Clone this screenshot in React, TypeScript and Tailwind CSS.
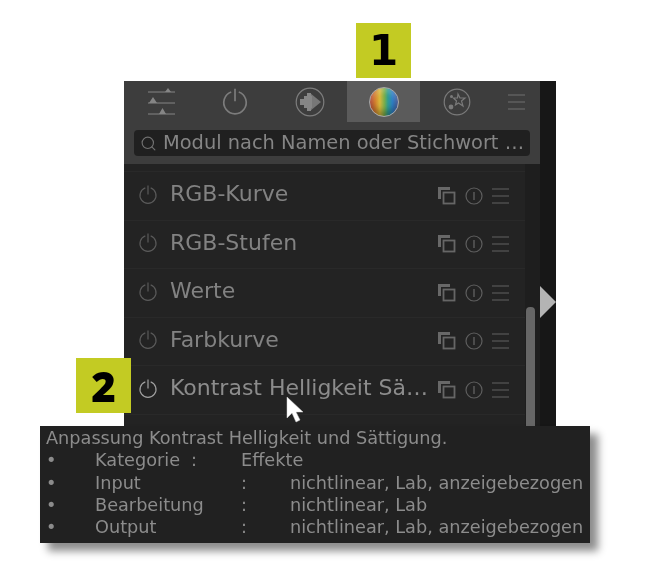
import { Search } from "lucide-react";

const modules = [
  { name: "RGB-Kurve" },
  { name: "RGB-Stufen" },
  { name: "Werte" },
  { name: "Farbkurve" },
  { name: "Kontrast Helligkeit Sä…", active: true },
];

const tooltipRows = [
  { label: "Kategorie", labelWidth: "w-[96px]", colonWidth: "w-[50px]", value: "Effekte" },
  { label: "Input", labelWidth: "w-[146px]", colonWidth: "w-[49px]", value: "nichtlinear, Lab, anzeigebezogen" },
  { label: "Bearbeitung", labelWidth: "w-[146px]", colonWidth: "w-[49px]", value: "nichtlinear, Lab" },
  { label: "Output", labelWidth: "w-[146px]", colonWidth: "w-[49px]", value: "nichtlinear, Lab, anzeigebezogen" },
];

function PowerIcon({ size = 20, className = "" }: { size?: number; className?: string }) {
  return (
    <svg width={size} height={size} viewBox="0 0 20 20" fill="none" stroke="currentColor" strokeWidth="1.200" className={className}>
      <path d="M7.300 2.900a8 8 0 1 0 5.400 0" />
      <path d="M10 0.500v9" />
    </svg>
  );
}

function SlidersIcon() {
  return (
    <svg width="27" height="30" viewBox="0 0 27 30" fill="none" stroke="#858585" strokeWidth="1">
      <path d="M0 5h27M0 16h27M0 27h27" />
      <path d="M17 5l3-4 3 4zM1 16l4-6 4 6zM11 27l3.500-6 3.500 6z" fill="#858585" stroke="none" />
    </svg>
  );
}

function ArrowCircleIcon() {
  return (
    <svg width="30" height="30" viewBox="0 0 30 30" fill="none" stroke="#7d7d7d" strokeWidth="1.200">
      <circle cx="15" cy="15" r="13.800" />
      <path d="M15 6l11 9-11 9z" fill="#777777" stroke="none" />
      <path d="M5 12h10v6H5zM9 9h8v12H9zM12 6h4v18h-4z" fill="#868686" stroke="none" />
    </svg>
  );
}

function ColorBall() {
  return (
    <div className="h-[30px] w-[30px] rounded-full border border-[#a8a8a8] bg-[linear-gradient(90deg,#d0523c_0%,#d9822f_18%,#d8b83a_35%,#76ad4c_52%,#2f9d8f_64%,#2f82c8_80%,#4a62ad_100%)] shadow-[inset_0_-5px_6px_rgba(0,0,0,0.3),inset_0_4px_5px_rgba(255,255,255,0.2)]" />
  );
}

function StarsIcon() {
  return (
    <svg width="28" height="28" viewBox="0 0 28 28" fill="none" stroke="#7a7a7a" strokeWidth="1.200">
      <circle cx="14" cy="14" r="12.800" />
      <path d="M15 6l2 4 5 0-3.500 3 1.500 5-4.500-3-3 2 1-4-3-3h4z" />
      <circle cx="8" cy="19" r="2.400" fill="#7a7a7a" stroke="none" />
      <circle cx="8.500" cy="8.500" r="1.500" fill="#7a7a7a" stroke="none" />
    </svg>
  );
}

function CopyIcon() {
  return (
    <svg width="18" height="18" viewBox="0 0 18 18" fill="none">
      <path d="M0 0h12v3H3v9H0z" fill="#686868" />
      <rect x="5.500" y="5.500" width="11" height="11" stroke="#666666" strokeWidth="1.800" />
    </svg>
  );
}

function InfoIcon() {
  return (
    <svg width="18" height="18" viewBox="0 0 18 18" fill="none" stroke="#5e5e5e" strokeWidth="1.200">
      <circle cx="9" cy="9" r="8" />
      <path d="M9 5v8" strokeWidth="1.400" />
    </svg>
  );
}

function MenuLines({ width = 17, color = "#636363" }: { width?: number; color?: string }) {
  return (
    <svg width={width} height="16" viewBox={`0 0 ${width} 16`} stroke={color} strokeWidth="1.200">
      <path d={`M0 1h${width}M0 8h${width}M0 15h${width}`} />
    </svg>
  );
}

function ModuleRow({ name, active }: { name: string; active?: boolean }) {
  return (
    <div className="flex h-[48.500px] items-center border-b border-[#292929] pr-[16px] pl-[14px]">
      <PowerIcon size={20} className={`mb-[2px] ${active ? "text-[#a0a0a0]" : "text-[#5a5a5a]"}`} />
      <span className={`ml-[12px] flex-1 pb-[4px] text-[22px] whitespace-nowrap ${active ? "text-[#8c8c8c]" : "text-[#828282]"}`}>{name}</span>
      <div className="flex items-center gap-[9px]">
        <CopyIcon />
        <InfoIcon />
        <MenuLines />
      </div>
    </div>
  );
}

export default function App() {
  return (
    <div className="relative h-[578px] w-[660px] overflow-hidden bg-white pt-[81px] pl-[124px] font-['DejaVu_Sans',sans-serif] blur-[0.5px]">
      {/* module panel */}
      <div className="relative h-[345px] w-[432px] bg-[#171717]">
        <div className="flex h-[83px] w-[416px] flex-col bg-[#3d3d3d]">
          <div className="flex h-[41px] items-center">
            <div className="flex w-[74px] justify-center"><SlidersIcon /></div>
            <div className="flex w-[74px] justify-center text-[#7c7c7c]"><PowerIcon size={28} /></div>
            <div className="flex w-[75px] justify-center"><ArrowCircleIcon /></div>
            <div className="flex h-[41px] w-[73px] items-center justify-center bg-[#5b5b5b]"><ColorBall /></div>
            <div className="flex w-[74px] justify-center"><StarsIcon /></div>
            <div className="ml-[14px] flex"><MenuLines color="#707070" /></div>
          </div>
          <div className="mt-[8px] ml-[10px] flex h-[26px] w-[396px] items-center rounded-[4px] bg-[#202020] pl-[6px] text-[19.400px] text-[#858585]">
            <Search size={17} strokeWidth={1.600} className="mr-[6px] shrink-0 text-[#727272]" />
            <span className="whitespace-nowrap">Modul nach Namen oder Stichwort …</span>
          </div>
        </div>
        <div className="h-[262px] w-[416px] bg-[#1e1e1e]">
          <div className="h-full w-[401px] bg-[#232323] pt-[7px]">
            <div className="border-t border-[#292929]">
              {modules.map((m) => (
                <ModuleRow key={m.name} name={m.name} active={m.active} />
              ))}
            </div>
          </div>
        </div>
        {/* scrollbar */}
        <div className="absolute top-[226px] right-[21px] h-[119px] w-[9px] rounded-t-[4px] bg-[#666666]" />
        {/* collapse arrow */}
        <div className="absolute top-[205px] right-0 h-0 w-0 border-y-[16px] border-l-[16px] border-y-transparent border-l-[#b4b4b4]" />
      </div>

      {/* callout badges */}
      <div className="absolute top-[23px] left-[356px] flex h-[55px] w-[55px] items-center justify-center bg-[#c3cb23] text-[42px] leading-none font-bold text-black">
        1
      </div>
      <div className="absolute top-[358px] left-[76px] flex h-[55px] w-[55px] items-center justify-center bg-[#c3cb23] font-['Open_Sans',sans-serif] text-[42px] leading-none font-extrabold text-black">
        2
      </div>

      {/* cursor */}
      <svg className="absolute top-[396px] left-[286px]" width="19" height="28" viewBox="0 0 19 28">
        <path d="M1 1v21l5-5 4 9 4-2-4-8h7z" fill="#ffffff" stroke="#d0d0d0" strokeWidth="0.500" />
      </svg>

      {/* tooltip */}
      <div className="absolute top-[426px] left-[40px] h-[117px] w-[550px] bg-[#212121] pt-[1px] pl-[6px] text-[17.700px] leading-[22.300px] whitespace-nowrap text-[#8c8c8c] shadow-[8px_8px_8px_rgba(0,0,0,0.45)]">
        <div>Anpassung Kontrast Helligkeit und Sättigung.</div>
        {tooltipRows.map((r) => (
          <div key={r.label} className="flex">
            <span className="w-[49px]">•</span>
            <span className={r.labelWidth}>{r.label}</span>
            <span className={r.colonWidth}>:</span>
            <span>{r.value}</span>
          </div>
        ))}
      </div>
    </div>
  );
}
